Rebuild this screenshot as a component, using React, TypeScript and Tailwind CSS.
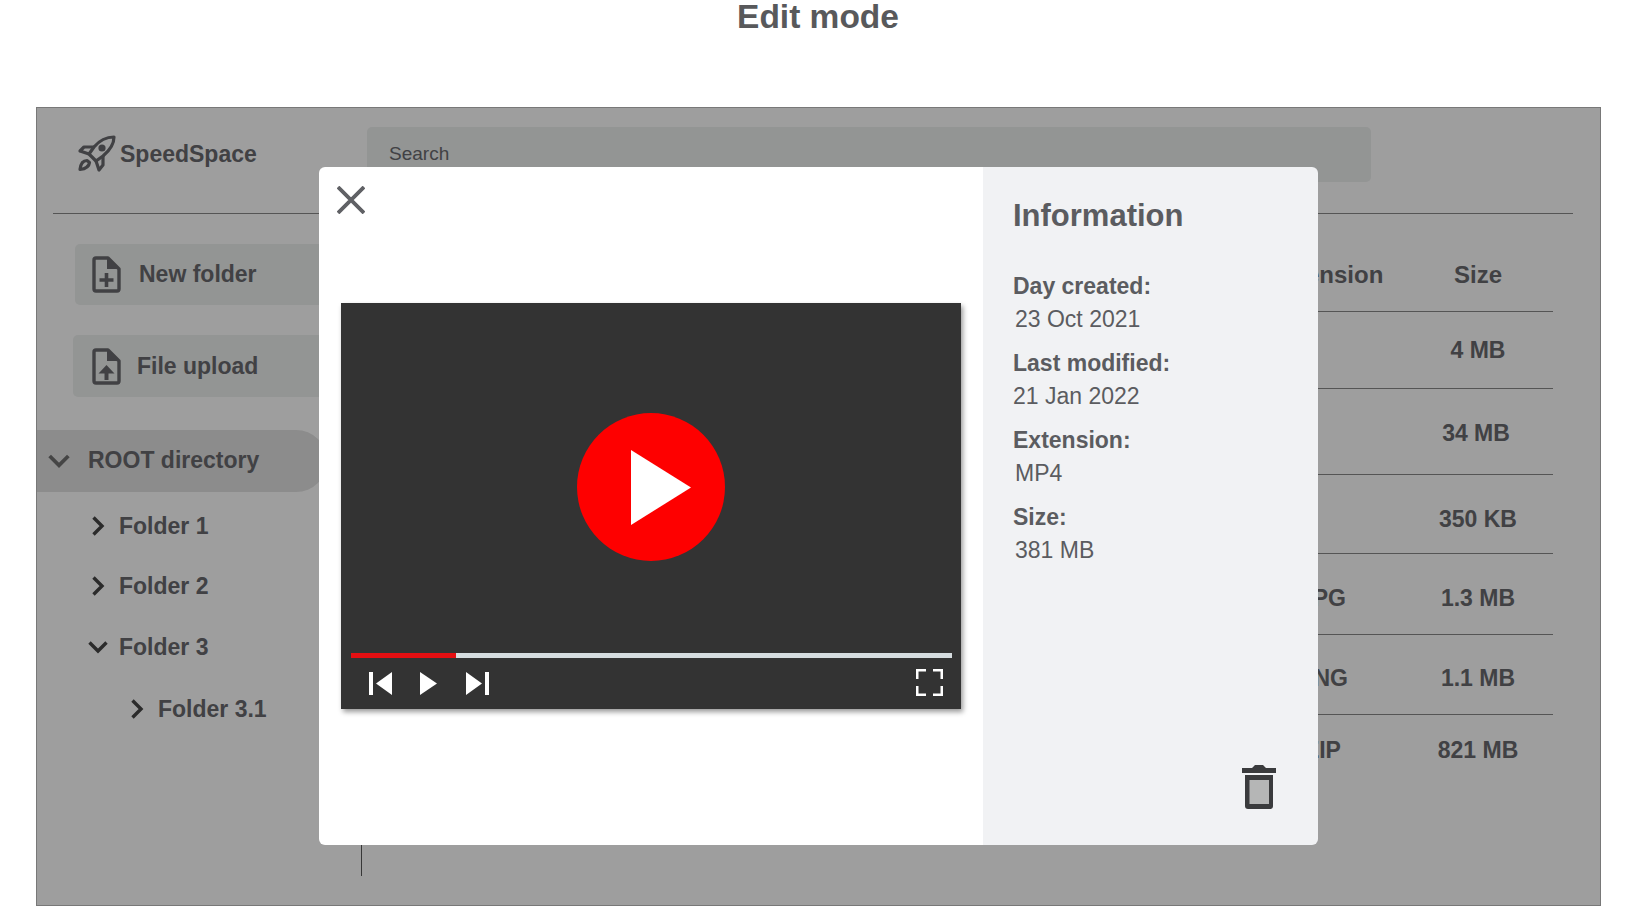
// App.tsx
const font = 'font-["Liberation_Sans",Arial,sans-serif]'

const rows = [
  { ext: '', size: '4 MB', cls: 'h-[77px]', sizeCls: '' },
  { ext: '', size: '34 MB', cls: 'h-[86px] pt-[4px]', sizeCls: 'pr-[4px]' },
  { ext: '', size: '350 KB', cls: 'h-[79px] pt-[10px]', sizeCls: '' },
  { ext: 'JPG', size: '1.3 MB', cls: 'h-[81px] pt-[8px]', sizeCls: '' },
  { ext: 'PNG', size: '1.1 MB', cls: 'h-[80px] pt-[8px]', sizeCls: '' },
  { ext: 'ZIP', size: '821 MB', cls: 'h-[72px] border-b-0 pb-[2px]', sizeCls: '' },
]

const info = [
  { label: 'Day created:', value: '23 Oct 2021', cls: 'pl-[2px]' },
  { label: 'Last modified:', value: '21 Jan 2022', cls: '' },
  { label: 'Extension:', value: 'MP4', cls: 'pl-[2px]' },
  { label: 'Size:', value: '381 MB', cls: 'pl-[2px]' },
]

function Chevron({ open, className }: { open?: boolean; className?: string }) {
  return (
    <svg viewBox="0 0 20 20" className={`h-[20px] w-[20px] ${className ?? ''}`} fill="none" stroke="currentColor" strokeWidth="3.4">
      {open ? <path d="M1.5 5.5 10 14l8.5-8.5" /> : <path d="M5.5 1.5 14 10l-8.5 8.5" />}
    </svg>
  )
}

function Rocket() {
  return (
    <svg viewBox="5 0 45 50" className="h-[50px] w-[45px] text-[#696a6e]" fill="none" stroke="currentColor" strokeWidth="3.2" strokeLinejoin="round">
      <path d="M44 8C36 8 29 12 24 18l-5 7 7 7 7-5c6-5 11-11 11-19Z" />
      <path d="M24 18H14l-4 4 9 3" />
      <path d="M33 27v9l-4 5-3-9" />
      <path d="M17 31.5c-4.500 0-6.500 4.500-7 9 4.500-.5 9-2.500 9.500-7Z" />
      <circle cx="32" cy="19" r="3.600" fill="currentColor" stroke="none" />
    </svg>
  )
}

function FileIcon({ kind }: { kind: 'add' | 'upload' }) {
  return (
    <svg viewBox="6 5 31 39" className="h-[39px] w-[31px] shrink-0 text-[#696a6e]" fill="none">
      <path d="M23 8H11a2 2 0 0 0-2 2v29a2 2 0 0 0 2 2h21a2 2 0 0 0 2-2V19Z" stroke="currentColor" strokeWidth="3.400" strokeLinejoin="round" />
      <path d="M22 7v12h13Z" fill="currentColor" />
      {kind === 'add' ? (
        <path d="M21.500 23v14M14.500 30h14" stroke="currentColor" strokeWidth="3.600" />
      ) : (
        <>
          <path d="M21.500 23 13.500 31.500h16Z" fill="currentColor" />
          <path d="M21.500 30v8" stroke="currentColor" strokeWidth="4" />
        </>
      )}
    </svg>
  )
}

function Trash() {
  return (
    <svg viewBox="11 9 34 46" className="h-[46px] w-[34px]">
      <path d="M11 13h10l3-3h8l3 3h10v5H11Z" fill="#3a3b3d" />
      <path d="M14 20h28v31a3 3 0 0 1-3 3H17a3 3 0 0 1-3-3Z" fill="#3a3b3d" />
      <rect x="18.500" y="25" width="19.500" height="24" fill="#b5b6b6" />
    </svg>
  )
}

function VideoPlayer() {
  return (
    <div className="flex h-[406px] w-[620px] flex-col bg-[#333333] shadow-[2px_3px_5px_rgba(0,0,0,0.4)]">
      <div className="flex flex-1 items-center justify-center pt-[18px]">
        <div className="flex h-[148px] w-[148px] items-center justify-center rounded-full bg-[#fe0000]">
          <svg viewBox="0 0 60 75" className="ml-[20px] h-[75px] w-[60px]">
            <path d="M0 0 60 37.500 0 75Z" fill="#fff" />
          </svg>
        </div>
      </div>
      <div className="ml-[10px] mr-[9px] h-[5px] bg-[#d6dde0]">
        <div className="h-full w-[105px] bg-[#e40f12]" />
      </div>
      <div className="flex h-[51px] items-start justify-between pl-[28px] pr-[18px]">
        <div className="flex items-center gap-[28px] pt-[14px]">
          <svg viewBox="0 0 23 23" className="h-[23px] w-[23px]" fill="#fff">
            <path d="M0 0h4v23H0ZM23 0v23L7 11.500Z" />
          </svg>
          <svg viewBox="0 0 17 23" className="h-[23px] w-[17px]" fill="#fff">
            <path d="M0 0 17 11.500 0 23Z" />
          </svg>
          <svg viewBox="0 0 23 23" className="ml-[1px] h-[23px] w-[23px]" fill="#fff">
            <path d="M0 0v23l16-11.500ZM19 0h4v23h-4Z" />
          </svg>
        </div>
        <svg viewBox="0 0 27 27" className="mt-[11px] h-[27px] w-[27px]" fill="none" stroke="#fff" strokeWidth="2.500">
          <path d="M1.250 10V1.250H10M17 1.250h8.750V10M25.750 17v8.750H17M10 25.750H1.250V17" />
        </svg>
      </div>
    </div>
  )
}

export default function App() {
  return (
    <div className={`h-[911px] overflow-hidden bg-white ${font}`}>
      <h1 className="h-[107px] pl-[3px] pt-[1px] text-center text-[33.5px] leading-[32px] font-bold text-[#58595b]">Edit mode</h1>

      <div className="relative ml-[36px] h-[799px] w-[1565px] overflow-hidden border border-[#787878] text-[#696a6e]">
        <header className="ml-[16px] mr-[27px] flex h-[106px] items-start border-b border-[#8a8a8a]">
          <div className="flex w-[314px] items-center pl-[22px] pt-[21px]">
            <Rocket />
            <span className="text-[23px] font-bold">SpeedSpace</span>
          </div>
          <div className="mt-[19px] flex h-[55px] w-[1004px] items-center rounded-[5px] bg-[#eef0ef] pl-[22px] text-[19px]">Search</div>
        </header>

        <div className="flex h-[662px]">
          <aside className="w-[325px] shrink-0 border-r border-[#5a5a5a] text-[23px] font-bold">
            <button className="ml-[38px] mt-[30px] flex h-[61px] w-[275px] items-center gap-[17px] rounded-[5px] bg-[#eef0ef] pb-[1px] pl-[16px] font-bold">
              <FileIcon kind="add" />
              New folder
            </button>
            <button className="ml-[36px] mt-[30px] flex h-[62px] w-[275px] items-center gap-[15px] rounded-[5px] bg-[#eef0ef] pl-[18px] font-bold">
              <FileIcon kind="upload" />
              File upload
            </button>
            <div className="mt-[33px] flex h-[62px] w-[290px] items-center gap-[18px] rounded-r-[31px] bg-[#e2e2e2] pb-[1px] pl-[11px]">
              <Chevron open className="h-[22px] w-[22px] text-[#707070]" />
              ROOT directory
            </div>
            <div className="mt-[4px] flex h-[60px] items-center gap-[11px] pl-[51px]">
              <Chevron className="text-[#464646]" />
              Folder 1
            </div>
            <div className="flex h-[60px] items-center gap-[11px] pl-[51px]">
              <Chevron className="text-[#464646]" />
              Folder 2
            </div>
            <div className="flex h-[61px] items-center gap-[11px] pl-[51px] pt-[1px]">
              <Chevron open className="text-[#464646]" />
              Folder 3
            </div>
            <div className="flex h-[63px] items-center gap-[11px] pl-[90px] pt-[1px]">
              <Chevron className="text-[#464646]" />
              Folder 3.1
            </div>
          </aside>

          <main className="min-w-0 flex-1 pr-[47px] text-[23px] font-bold">
            <div className="flex h-[98px] items-center border-b border-[#8a8a8a] pt-[25px] text-center text-[24px]">
              <span className="flex-1" />
              <span className="w-[162px] pl-[8px]">Extension</span>
              <span className="w-[150px]">Size</span>
            </div>
            {rows.map((row) => (
              <div key={row.size} className={`flex items-center border-b border-[#8a8a8a] text-center ${row.cls}`}>
                <span className="flex-1" />
                <span className="w-[162px] pl-[2px]">{row.ext}</span>
                <span className={`w-[150px] ${row.sizeCls}`}>{row.size}</span>
              </div>
            ))}
          </main>
        </div>

        <div className="absolute inset-0 bg-black/38 pl-[282px] pt-[59px]">
          <div className="flex h-[678px] w-[999px] overflow-hidden rounded-[6px]">
            <section className="w-[664px] bg-white pl-[22px]">
              <div className="-ml-[4px] flex h-[136px] items-start pt-[19px]">
                <svg viewBox="0 0 28 28" className="h-[28px] w-[28px]" stroke="#606165" strokeWidth="3.800">
                  <path d="M1 1l26 26M27 1 1 27" />
                </svg>
              </div>
              <VideoPlayer />
            </section>
            <section className="flex flex-1 flex-col bg-[#f1f2f4] pb-[35px] pl-[30px] pr-[42px] pt-[31px] text-[#5b5c60]">
              <h2 className="text-[31px] leading-[36px] font-bold">Information</h2>
              <div className="mt-[36px] flex flex-col gap-[11px] text-[23px] leading-[33px]">
                {info.map((item) => (
                  <div key={item.label}>
                    <p className="font-bold">{item.label}</p>
                    <p className={item.cls}>{item.value}</p>
                  </div>
                ))}
              </div>
              <div className="mt-auto self-end">
                <Trash />
              </div>
            </section>
          </div>
        </div>
      </div>
    </div>
  )
}
